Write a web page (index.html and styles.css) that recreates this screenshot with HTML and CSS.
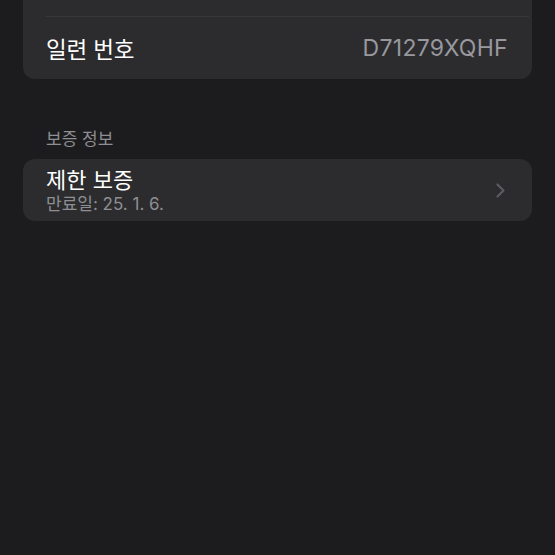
FILE: index.html
```html
<!DOCTYPE html>
<html lang="ko">
<head>
  <meta charset="UTF-8" />
  <meta name="viewport" content="width=device-width, initial-scale=1.0" />
  <title>정보</title>
  <link rel="stylesheet" href="styles.css">
</head>
<body>
  <div class="screen">
    <section class="group group-top">
      <div class="row row-clip"></div>
      <div class="row">
        <span class="row-label">일련 번호</span>
        <span class="row-value">D71279XQHF</span>
      </div>
    </section>

    <h2 class="group-title">보증 정보</h2>
    <section class="group">
      <div class="row row-link">
        <div class="row-text">
          <span class="row-label">제한 보증</span>
          <span class="row-sub">만료일: 25. 1. 6.</span>
        </div>
        <svg class="chevron" width="11" height="17" viewBox="0 0 11 17">
          <path d="M2.5 2.5l6 6-6 6" fill="none" stroke="#5b5b60" stroke-width="2.2" stroke-linecap="round" stroke-linejoin="round"/>
        </svg>
      </div>
    </section>
  </div>
</body>
</html>
```

FILE: styles.css
```css
* {
  margin: 0;
  padding: 0;
  box-sizing: border-box;
}

html,
body {
  height: 100%;
}

body {
  background-color: #1c1c1e;
  color: #ffffff;
  font-family: "Inter", "Noto Sans CJK KR", sans-serif;
}

.screen {
  padding: 0 23px;
}

.group {
  background-color: #2c2c2e;
  border-radius: 12px;
}

.group-top {
  border-radius: 0 0 12px 12px;
}

.row {
  display: flex;
  align-items: center;
  justify-content: space-between;
  height: 62px;
  padding: 0 24px 0 23px;
}

.row-clip {
  height: 17px;
  border-bottom: 1px solid #38383a;
  margin-left: 23px;
  margin-right: 3px;
  padding: 0;
}

.row-label {
  font-size: 22.5px;
  letter-spacing: -0.2px;
}

.row-value {
  font-size: 23px;
  letter-spacing: 0.3px;
  color: #98989e;
}

.group-title {
  font-size: 17px;
  font-weight: 400;
  color: #8e8e93;
  padding: 48px 0 8px 23px;
  line-height: 24px;
}

.row-link {
  height: 62px;
  padding-right: 26px;
}

.row-text {
  display: flex;
  flex-direction: column;
}

.row-link .row-label {
  font-size: 22px;
  line-height: 27px;
  letter-spacing: 0;
}

.row-sub {
  font-size: 17px;
  color: #8e8e93;
  line-height: 20px;
}
```
